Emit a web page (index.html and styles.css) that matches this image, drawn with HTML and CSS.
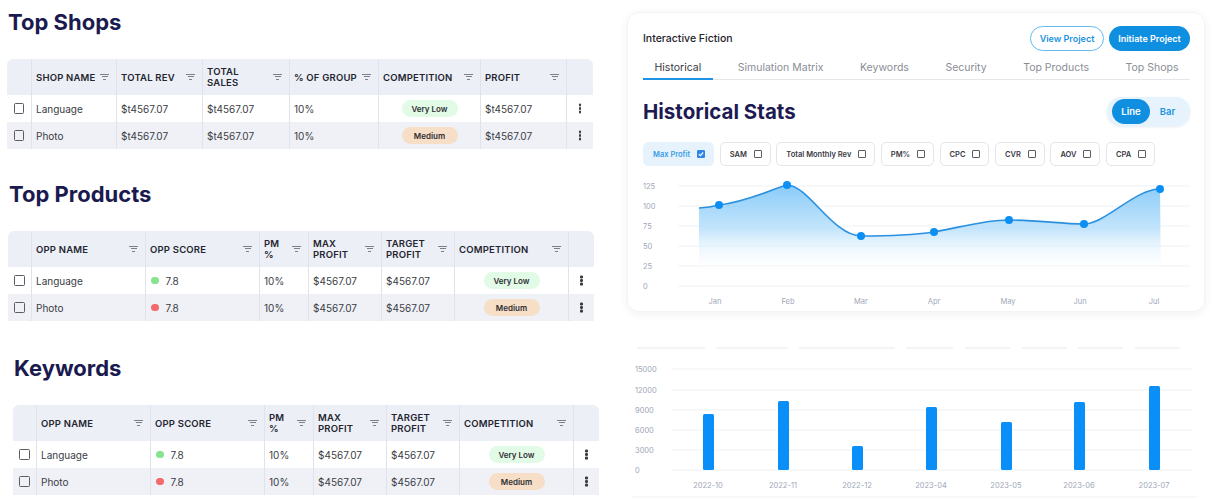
FILE: index.html
```html
<!DOCTYPE html>
<html>
<head>
    <meta charset="UTF-8" />
    <title>Dashboard</title>
    <link rel="stylesheet" href="styles.css">
</head>
<body>
<div class="page">
    <!-- left: three tables -->
    <div class="left">
        <section class="block block-shops">
            <h2 class="title">Top Shops</h2>
            <div class="tbl tbl-shops">
                <div class="tr th">
                    <div class="td"></div>
                    <div class="td"><span>SHOP NAME</span><i class="filter"></i></div>
                    <div class="td"><span>TOTAL REV</span><i class="filter"></i></div>
                    <div class="td"><span>TOTAL<br>SALES</span><i class="filter"></i></div>
                    <div class="td"><span>% OF GROUP</span><i class="filter"></i></div>
                    <div class="td"><span>COMPETITION</span><i class="filter"></i></div>
                    <div class="td"><span>PROFIT</span><i class="filter"></i></div>
                    <div class="td"></div>
                </div>
                <div class="tr">
                    <div class="td center"><i class="cb"></i></div>
                    <div class="td">Language</div>
                    <div class="td">$t4567.07</div>
                    <div class="td">$t4567.07</div>
                    <div class="td">10%</div>
                    <div class="td center"><span class="badge low">Very Low</span></div>
                    <div class="td">$t4567.07</div>
                    <div class="td center"><i class="kebab"></i></div>
                </div>
                <div class="tr alt">
                    <div class="td center"><i class="cb"></i></div>
                    <div class="td">Photo</div>
                    <div class="td">$t4567.07</div>
                    <div class="td">$t4567.07</div>
                    <div class="td">10%</div>
                    <div class="td center"><span class="badge mid">Medium</span></div>
                    <div class="td">$t4567.07</div>
                    <div class="td center"><i class="kebab"></i></div>
                </div>
            </div>
        </section>

        <section class="block block-products">
            <h2 class="title">Top Products</h2>
            <div class="tbl tbl-opps">
                <div class="tr th">
                    <div class="td"></div>
                    <div class="td"><span>OPP NAME</span><i class="filter"></i></div>
                    <div class="td"><span>OPP SCORE</span><i class="filter"></i></div>
                    <div class="td"><span>PM<br>%</span><i class="filter"></i></div>
                    <div class="td"><span>MAX<br>PROFIT</span><i class="filter"></i></div>
                    <div class="td"><span>TARGET<br>PROFIT</span><i class="filter"></i></div>
                    <div class="td"><span>COMPETITION</span><i class="filter"></i></div>
                    <div class="td"></div>
                </div>
                <div class="tr">
                    <div class="td center"><i class="cb"></i></div>
                    <div class="td">Language</div>
                    <div class="td score"><i class="dot green"></i>7.8</div>
                    <div class="td">10%</div>
                    <div class="td">$4567.07</div>
                    <div class="td">$4567.07</div>
                    <div class="td center"><span class="badge low">Very Low</span></div>
                    <div class="td center"><i class="kebab"></i></div>
                </div>
                <div class="tr alt">
                    <div class="td center"><i class="cb"></i></div>
                    <div class="td">Photo</div>
                    <div class="td score"><i class="dot red"></i>7.8</div>
                    <div class="td">10%</div>
                    <div class="td">$4567.07</div>
                    <div class="td">$4567.07</div>
                    <div class="td center"><span class="badge mid">Medium</span></div>
                    <div class="td center"><i class="kebab"></i></div>
                </div>
            </div>
        </section>

        <section class="block block-keywords">
            <h2 class="title">Keywords</h2>
            <div class="tbl tbl-opps">
                <div class="tr th">
                    <div class="td"></div>
                    <div class="td"><span>OPP NAME</span><i class="filter"></i></div>
                    <div class="td"><span>OPP SCORE</span><i class="filter"></i></div>
                    <div class="td"><span>PM<br>%</span><i class="filter"></i></div>
                    <div class="td"><span>MAX<br>PROFIT</span><i class="filter"></i></div>
                    <div class="td"><span>TARGET<br>PROFIT</span><i class="filter"></i></div>
                    <div class="td"><span>COMPETITION</span><i class="filter"></i></div>
                    <div class="td"></div>
                </div>
                <div class="tr">
                    <div class="td center"><i class="cb"></i></div>
                    <div class="td">Language</div>
                    <div class="td score"><i class="dot green"></i>7.8</div>
                    <div class="td">10%</div>
                    <div class="td">$4567.07</div>
                    <div class="td">$4567.07</div>
                    <div class="td center"><span class="badge low">Very Low</span></div>
                    <div class="td center"><i class="kebab"></i></div>
                </div>
                <div class="tr alt">
                    <div class="td center"><i class="cb"></i></div>
                    <div class="td">Photo</div>
                    <div class="td score"><i class="dot red"></i>7.8</div>
                    <div class="td">10%</div>
                    <div class="td">$4567.07</div>
                    <div class="td">$4567.07</div>
                    <div class="td center"><span class="badge mid">Medium</span></div>
                    <div class="td center"><i class="kebab"></i></div>
                </div>
            </div>
        </section>
    </div>

    <!-- right: stats card + bar chart -->
    <div class="right">
        <div class="card">
            <div class="card-head">
                <div class="card-name">Interactive Fiction</div>
                <div class="actions">
                    <button class="btn btn-outline">View Project</button>
                    <button class="btn btn-fill">Initiate Project</button>
                </div>
            </div>

            <div class="tabs">
                <div class="tab active">Historical</div>
                <div class="tab">Simulation Matrix</div>
                <div class="tab">Keywords</div>
                <div class="tab">Security</div>
                <div class="tab">Top Products</div>
                <div class="tab">Top Shops</div>
            </div>

            <div class="stats-head">
                <h2 class="stats-title">Historical Stats</h2>
                <div class="toggle">
                    <span class="toggle-on">Line</span>
                    <span class="toggle-off">Bar</span>
                </div>
            </div>

            <div class="chips">
                <div class="chip on">Max Profit
                    <svg class="cb-on" width="8" height="8" viewBox="0 0 8 8"><rect width="8" height="8" rx="1.2" fill="#2f86e6"/><path d="M1.8 4.1 3.3 5.6 6.2 2.5" fill="none" stroke="#fff" stroke-width="1.1"/></svg>
                </div>
                <div class="chip">SAM <i class="cb small"></i></div>
                <div class="chip">Total Monthly Rev <i class="cb small"></i></div>
                <div class="chip">PM% <i class="cb small"></i></div>
                <div class="chip">CPC <i class="cb small"></i></div>
                <div class="chip">CVR <i class="cb small"></i></div>
                <div class="chip">AOV <i class="cb small"></i></div>
                <div class="chip">CPA <i class="cb small"></i></div>
            </div>

            <svg class="line-chart axis" width="547" height="135" viewBox="0 0 547 135">
                <defs>
                    <linearGradient id="area" x1="0" y1="0" x2="0" y2="96" gradientUnits="userSpaceOnUse">
                        <stop offset="0" stop-color="#74c2f8" stop-opacity="0.95"/>
                        <stop offset="0.55" stop-color="#b4defb" stop-opacity="0.8"/>
                        <stop offset="1" stop-color="#ffffff" stop-opacity="0"/>
                    </linearGradient>
                </defs>
                <g class="grid">
                    <line x1="35" x2="547" y1="10" y2="10"/>
                    <line x1="35" x2="547" y1="30" y2="30"/>
                    <line x1="35" x2="547" y1="50" y2="50"/>
                    <line x1="35" x2="547" y1="70" y2="70"/>
                    <line x1="35" x2="547" y1="90" y2="90"/>
                    <line x1="35" x2="547" y1="110" y2="110"/>
                </g>
                <g>
                    <text x="0" y="10">125</text>
                    <text x="0" y="30">100</text>
                    <text x="0" y="50">75</text>
                    <text x="0" y="70">50</text>
                    <text x="0" y="90">25</text>
                    <text x="0" y="110">0</text>
                </g>
                <path d="M56 32 C64 31.5 70 30.5 76 29 C104 26 132 12 144 9 C165 9 190 60 218 60 C240 60 270 59 291 56 C315 52 340 44 366 44 C392 44 420 48 441 48 C462 48 492 13 517 13 L518 110 L56 110 Z" fill="url(#area)"/>
                <path d="M56 32 C64 31.5 70 30.5 76 29 C104 26 132 12 144 9 C165 9 190 60 218 60 C240 60 270 59 291 56 C315 52 340 44 366 44 C392 44 420 48 441 48 C462 48 492 13 517 13" fill="none" stroke="#2a90df" stroke-width="1.6"/>
                <g fill="#0b8ff2">
                    <circle cx="76" cy="29" r="4"/>
                    <circle cx="144" cy="9" r="4"/>
                    <circle cx="218" cy="60" r="4"/>
                    <circle cx="291" cy="56" r="4"/>
                    <circle cx="366" cy="44" r="4"/>
                    <circle cx="441" cy="48" r="4"/>
                    <circle cx="517" cy="13" r="4"/>
                </g>
                <g text-anchor="middle">
                    <text x="72" y="125">Jan</text>
                    <text x="145" y="125">Feb</text>
                    <text x="218" y="125">Mar</text>
                    <text x="291" y="125">Apr</text>
                    <text x="365" y="125">May</text>
                    <text x="437" y="125">Jun</text>
                    <text x="511" y="125">Jul</text>
                </g>
            </svg>
        </div>

        <svg class="bar-chart axis" width="565" height="160" viewBox="0 0 565 160">
            <g class="legend">
                <line x1="5" x2="73" y1="9" y2="9"/>
                <line x1="84" x2="156" y1="9" y2="9"/>
                <line x1="167" x2="263" y1="9" y2="9"/>
                <line x1="274" x2="321" y1="9" y2="9"/>
                <line x1="333" x2="378" y1="9" y2="9"/>
                <line x1="390" x2="435" y1="9" y2="9"/>
                <line x1="446" x2="491" y1="9" y2="9"/>
                <line x1="503" x2="548" y1="9" y2="9"/>
            </g>
            <g class="grid">
                <line x1="40" x2="560" y1="30" y2="30"/>
                <line x1="40" x2="560" y1="51" y2="51"/>
                <line x1="40" x2="560" y1="71" y2="71"/>
                <line x1="40" x2="560" y1="91" y2="91"/>
                <line x1="40" x2="560" y1="111" y2="111"/>
                <line x1="40" x2="560" y1="131" y2="131"/>
                <line x1="0" x2="565" y1="158" y2="158"/>
            </g>
            <g>
                <text x="3" y="30">15000</text>
                <text x="3" y="51">12000</text>
                <text x="3" y="71">9000</text>
                <text x="3" y="91">6000</text>
                <text x="3" y="111">3000</text>
                <text x="3" y="131">0</text>
            </g>
            <g fill="#0a8ff8">
                <rect x="71" y="75" width="11" height="56" rx="1.5"/>
                <rect x="146" y="62" width="11" height="69" rx="1.5"/>
                <rect x="220" y="107" width="11" height="24" rx="1.5"/>
                <rect x="294" y="68" width="11" height="63" rx="1.5"/>
                <rect x="369" y="83" width="11" height="48" rx="1.5"/>
                <rect x="442" y="63" width="11" height="68" rx="1.5"/>
                <rect x="517" y="47" width="11" height="84" rx="1.5"/>
            </g>
            <g text-anchor="middle">
                <text x="76" y="146">2022-10</text>
                <text x="151" y="146">2022-11</text>
                <text x="225" y="146">2022-12</text>
                <text x="299" y="146">2023-04</text>
                <text x="374" y="146">2023-05</text>
                <text x="447" y="146">2023-06</text>
                <text x="522" y="146">2023-07</text>
            </g>
        </svg>
    </div>
</div>
</body>
</html>
```

FILE: styles.css
```css
*{
    margin: 0;
    padding: 0;
    box-sizing: border-box;
}

body{
    width: 1219px;
    height: 500px;
    overflow: hidden;
    background-color: #fff;
    font-family: Inter, "Noto Sans", sans-serif;
    color: #3b3c44;
}

.page{
    display: flex;
}

/* ---------- left column ---------- */
.left{
    width: 627px;
    flex: none;
}

.block-shops{
    margin: 8px 0 0 7px;
}

.block-products{
    margin: 31px 0 0 8px;
}

.block-keywords{
    margin: 33px 0 0 13px;
}

.title{
    font-size: 22px;
    line-height: 28px;
    font-weight: 700;
    color: #1b1a4f;
    margin: 0 0 23px 1px;
}

.tbl{
    width: 586px;
    border-radius: 6px 6px 0 0;
    overflow: hidden;
    font-size: 10px;
}

.tr{
    display: grid;
    height: 27px;
}

.tbl-shops .tr{
    grid-template-columns: 25px 85px 86px 87px 89px 102px 86px 26px;
}

.tbl-opps .tr{
    grid-template-columns: 24px 114px 114px 49px 73px 73px 114px 25px;
}

.th{
    height: 36px;
    background-color: #eceff6;
}

.tr.alt{
    background-color: #eff1f7;
}

.td{
    display: flex;
    align-items: center;
    padding: 0 7px 0 4px;
    border-right: 1px solid #e0e3ec;
    min-width: 0;
    white-space: nowrap;
}

.td:last-child{
    border-right: 0;
}

.td.center{
    justify-content: center;
    padding: 0;
}

.th .td{
    justify-content: space-between;
    font-size: 9.5px;
    line-height: 11px;
    font-weight: 600;
    letter-spacing: .2px;
    color: #25252f;
}

.filter{
    flex: none;
    width: 9px;
    height: 6px;
    background:
        linear-gradient(#7d808c, #7d808c) top center / 9px 1.2px no-repeat,
        linear-gradient(#7d808c, #7d808c) center / 6px 1.2px no-repeat,
        linear-gradient(#7d808c, #7d808c) bottom center / 3px 1.2px no-repeat;
}

.cb{
    display: block;
    flex: none;
    width: 10.5px;
    height: 10.5px;
    border: 1.5px solid #5b5b60;
    border-radius: 1.5px;
}

.cb.small{
    width: 8px;
    height: 8px;
    border-width: 1.2px;
    border-radius: 1px;
}

.kebab{
    display: block;
    width: 2.4px;
    height: 2.4px;
    border-radius: 50%;
    background-color: #3a3a40;
    box-shadow: 0 -3.6px 0 #3a3a40, 0 3.6px 0 #3a3a40;
}

.score{
    padding-left: 5px;
}

.dot{
    width: 7.5px;
    height: 7.5px;
    border-radius: 50%;
    margin-right: 7px;
}

.dot.green{
    background-color: #86e38f;
}

.dot.red{
    background-color: #f26a6a;
}

.badge{
    display: flex;
    align-items: center;
    justify-content: center;
    width: 56px;
    height: 17px;
    border-radius: 9px;
    font-size: 8px;
    font-weight: 600;
    color: #2e2e33;
}

.badge.low{
    background-color: #e2fbe7;
}

.badge.mid{
    background-color: #f6dec7;
}

/* ---------- right column ---------- */
.right{
    width: 578px;
    flex: none;
    padding-top: 12px;
}

.card{
    height: 300px;
    border-radius: 12px;
    border: 1px solid #f2f3f6;
    box-shadow: 0 2px 10px rgba(40, 50, 90, .07);
    padding: 13px 14px 0 15px;
}

.card-head{
    display: flex;
    align-items: center;
    justify-content: space-between;
    height: 25px;
}

.card-name{
    font-size: 10.5px;
    font-weight: 500;
    color: #23232b;
}

.actions{
    display: flex;
    gap: 5px;
}

.btn{
    height: 25px;
    border-radius: 13px;
    font-family: inherit;
    font-size: 9px;
    font-weight: 600;
    display: flex;
    align-items: center;
    justify-content: center;
}

.btn-outline{
    width: 74px;
    border: 1px solid #62bdf0;
    color: #1c93e0;
    background-color: #fff;
}

.btn-fill{
    width: 81px;
    border: 0;
    background-color: #0f8fe0;
    color: #fff;
}

.tabs{
    display: flex;
    justify-content: space-between;
    margin-top: 5px;
    border-bottom: 1px solid #e4e6eb;
}

.tab{
    padding: 5px 11.5px 4px;
    font-size: 10.5px;
    line-height: 14px;
    color: #8a8d96;
}

.tab.active{
    color: #3a3a42;
    border-bottom: 2px solid #1e93e4;
    margin-bottom: -1px;
    padding-bottom: 3px;
}

.stats-head{
    display: flex;
    align-items: center;
    justify-content: space-between;
    margin-top: 17px;
    height: 29px;
}

.stats-title{
    font-size: 20.5px;
    line-height: 29px;
    font-weight: 700;
    color: #1d1b52;
}

.toggle{
    display: flex;
    align-items: center;
    width: 83px;
    height: 29px;
    padding: 0 5px;
    border-radius: 15px;
    background-color: #e6f3fd;
    box-shadow: 0 1px 3px rgba(30, 100, 160, .12);
    font-size: 9.5px;
    font-weight: 600;
}

.toggle-on{
    width: 38px;
    height: 25px;
    line-height: 25px;
    text-align: center;
    border-radius: 13px;
    background-color: #108ee0;
    color: #fff;
}

.toggle-off{
    flex: 1;
    text-align: center;
    color: #1c93e0;
}

.chips{
    display: flex;
    gap: 5.5px;
    margin-top: 16px;
}

.chip{
    display: flex;
    flex: none;
    align-items: center;
    gap: 7px;
    height: 24px;
    padding: 0 8px 0 9px;
    border: 1px solid #e3e5ea;
    border-radius: 5px;
    font-size: 7.5px;
    font-weight: 600;
    white-space: nowrap;
    color: #3a3a44;
}

.chip.on{
    background-color: #e6f3fd;
    border-color: #e6f3fd;
    color: #3b9de4;
}

.cb-on{
    display: block;
    flex: none;
}

.line-chart{
    display: block;
    margin-top: 10px;
}

.bar-chart{
    display: block;
    margin: 27px 0 0 5px;
}

.axis text{
    font-family: Inter, "Noto Sans", sans-serif;
    font-size: 7.5px;
    fill: #a0a7b9;
    dominant-baseline: central;
}

.grid line{
    stroke: #eff1f4;
    stroke-width: 1;
}

.legend line{
    stroke: #f3f4f6;
    stroke-width: 2;
}
```
